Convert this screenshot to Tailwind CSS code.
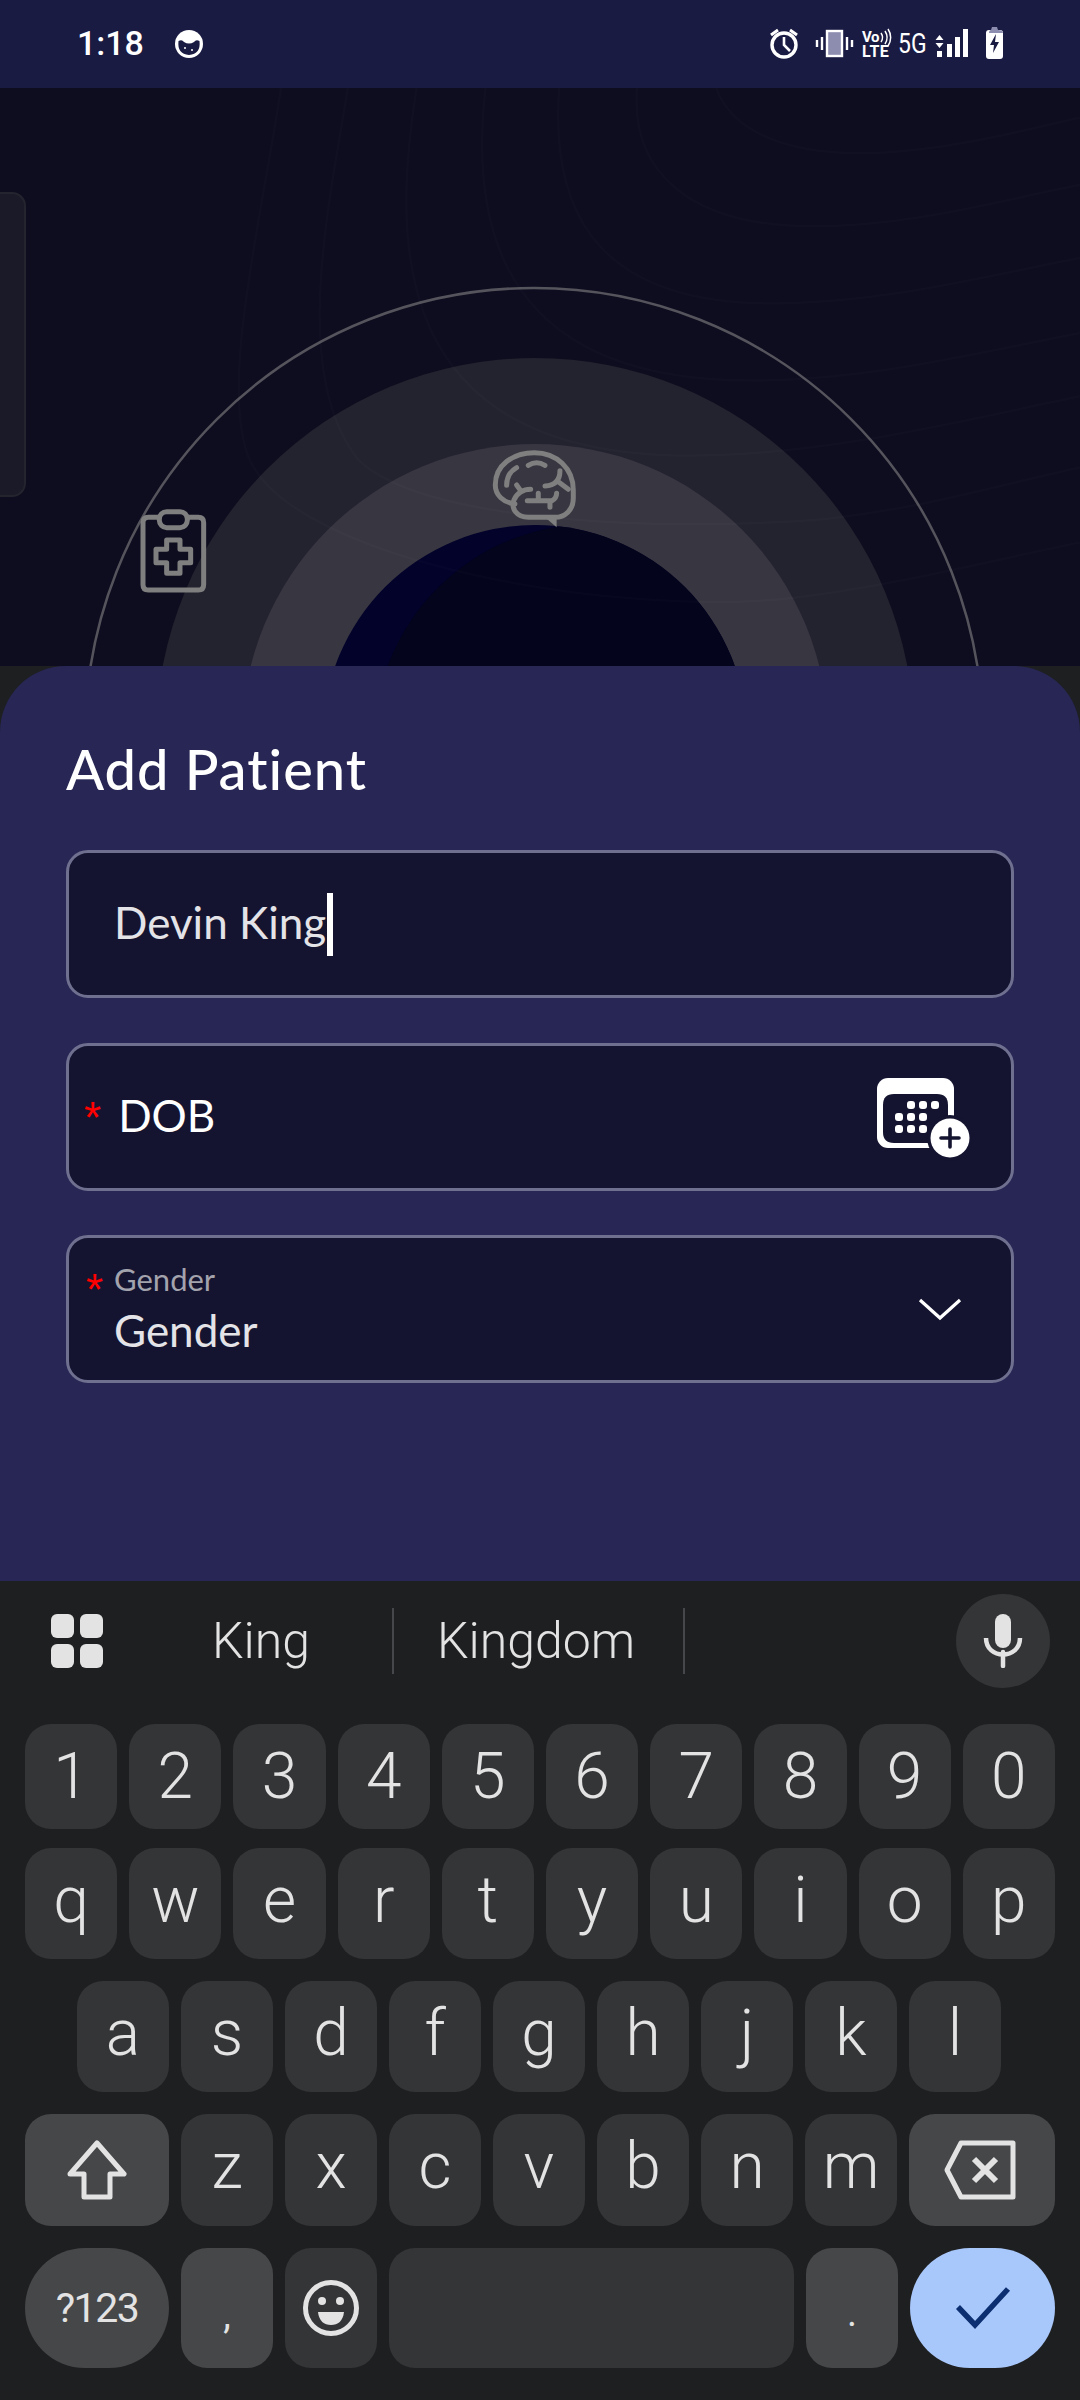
<!doctype html>
<html>
<head>
<meta charset="utf-8">
<script src="https://cdn.jsdelivr.net/npm/@tailwindcss/browser@4"></script>
</head>
<body class="m-0 bg-[#1e1f21]">
<div class="w-[1080px] h-[2400px] flex flex-col overflow-hidden font-['Roboto',sans-serif]">

  <!-- status bar -->
  <div class="h-[88px] shrink-0 bg-[#1a1b42] relative flex items-center text-white">
    <span class="ml-[77px] text-[34px] leading-none font-medium mt-[-2px]">1:18</span>
    <svg class="ml-[31px] mt-[0px]" width="28" height="28" viewBox="0 0 28 28"><circle cx="14" cy="14" r="14" fill="#fff"/><path d="M3.5 11Q7 9 9 12Q14 15 19 12Q21 9 24.500 11Q26 24 14 25Q2 24 3.500 11Z" fill="#1a1b42"/><g fill="#fff"><circle cx="10" cy="18" r="1"/><circle cx="17" cy="20" r="1"/></g></svg>
    <svg class="absolute left-0 top-0" width="1080" height="88" viewBox="0 0 1080 88">
      <g fill="none" stroke="#fff" stroke-width="3.4">
        <circle cx="784" cy="45" r="12"/>
        <path d="M784 37v8l6 6" stroke-width="2.6"/>
        <path d="M771 35l7-5M797 35l-7-5" stroke-width="3"/>
        <rect x="827" y="31" width="15" height="25" stroke-width="2.4" fill="#8d8db0"/>
        <path d="M822 37v13M817 40v7M847 37v13M852 40v7" stroke-width="2.4"/>
        <path d="M881 33a8 8 0 0 1 0 9M885 31a12 12 0 0 1 0 13M888 29a15 15 0 0 1 0 17" stroke-width="1.5"/>
      </g>
      <g fill="#fff">
        <rect x="937" y="51" width="5" height="6"/><rect x="947" y="44" width="5" height="13"/><rect x="955" y="37" width="5" height="20"/><rect x="963" y="29" width="5" height="28"/>
        <path d="M939.500 35l4 5h-8zM939.500 48l-4-5h8z"/>
        <rect x="986" y="30" width="17" height="29" rx="3"/>
      </g>
      <path d="M989 33Q989 30 991 30L992 27H997L998 30Q1003 30 1003 33Z" fill="#8d8db0"/>
      <path d="M996 34l-6 11h4l-1 8 6-11h-4z" fill="#1a1b42"/>
    </svg>
    <span class="absolute left-[862px] top-[30px] text-[15px] leading-[15px] font-bold tracking-[-0.5px]">Vo</span>
    <span class="absolute left-[862px] top-[44px] text-[16px] leading-[15px] font-bold tracking-[0.5px]">LTE</span>
    <span class="absolute left-[898px] top-[30px] text-[28px] leading-[28px] font-normal origin-left scale-x-[0.82]">5G</span>
  </div>

  <!-- dimmed app background -->
  <div class="relative h-[578px] shrink-0 bg-[#0d0d1f] overflow-hidden">
    <svg class="absolute left-0 top-[-88px]" width="1080" height="666" viewBox="0 0 1080 666">
      <defs><clipPath id="core"><circle cx="535" cy="737" r="212"/></clipPath></defs>
      <circle cx="534" cy="737" r="449" fill="none" stroke="#55545c" stroke-width="2.500"/>
      <circle cx="535" cy="737" r="379" fill="#23222f"/>
      <circle cx="535" cy="737" r="293" fill="#383641"/>
      <circle cx="535" cy="737" r="212" fill="#02022a"/>
      <g clip-path="url(#core)"><circle cx="592" cy="742" r="218" fill="#04041c"/></g>
      <g transform="translate(0 80) scale(0.6887 0.3954)" fill="none" stroke="#fff" stroke-opacity="0.016" stroke-width="2.5">
        <path vector-effect="non-scaling-stroke" d="M1040 20C1060 120 1130 185 1250 185C1350 185 1460 140 1568 95"/>
        <path vector-effect="non-scaling-stroke" d="M925 20C915 230 1000 370 1180 370C1320 370 1440 310 1568 265"/>
        <path vector-effect="non-scaling-stroke" d="M812 20C800 300 850 565 1120 565C1280 565 1420 500 1568 450"/>
        <path vector-effect="non-scaling-stroke" d="M705 20C680 400 740 760 1090 760C1260 760 1420 690 1568 640"/>
        <path vector-effect="non-scaling-stroke" d="M605 20C570 400 560 950 1000 950C1200 950 1400 860 1568 800"/>
        <path vector-effect="non-scaling-stroke" d="M505 20C480 300 420 740 520 960C620 1130 1000 1140 1200 1110C1350 1080 1460 1020 1568 980"/>
        <path vector-effect="non-scaling-stroke" d="M408 20C380 350 320 760 360 950C420 1220 900 1360 1150 1310C1300 1280 1450 1210 1568 1170"/>
      </g>
      <!-- clipboard -->
      <g transform="translate(120 430) scale(0.3333)" fill="none" stroke="#7f7f7f" stroke-width="15" stroke-linejoin="round" stroke-linecap="round">
        <path d="M118 262H85Q69 262 69 278V464Q69 480 85 480H235Q251 480 251 464V278Q251 262 235 262H202"/>
        <rect x="118" y="245" width="84" height="48" rx="22"/>
        <path d="M140 330H180V358H212V398H180V430H140V398H108V358H140Z"/>
        <!-- brain -->
        <path d="M1185 222C1150 218 1126 195 1126 165C1126 105 1180 68 1243 68C1310 68 1360 115 1360 180V205C1360 240 1335 262 1305 262H1225C1190 262 1172 235 1182 210C1190 190 1210 178 1232 178"/>
        <path d="M1225 106Q1250 90 1275 106M1160 166Q1160 130 1190 113M1275 168Q1320 165 1320 122M1190 165L1202 182M1315 155L1345 178M1222 212H1296Q1310 205 1310 190M1255 190V212M1290 212V232"/>
        <path d="M1275 262L1310 292V262Z" fill="#7f7f7f" stroke="none"/>
      </g>
    </svg>
    <div class="absolute left-[-14px] top-[104px] w-[40px] h-[305px] rounded-[14px] bg-[#1a1a28] border-2 border-[#24242f]"></div>
  </div>

  <!-- sheet -->
  <div class="relative z-10 h-[915px] shrink-0 bg-[#272654] rounded-t-[66px] px-[66px] pt-[72px] font-['Lato',sans-serif] text-white">
    <div class="text-[56px] leading-[62px] font-medium tracking-[1px]">Add Patient</div>

    <div class="mt-[50px] h-[148px] rounded-[22px] border-[3px] border-[#6f6f90] bg-[#141430] flex items-center pl-[45px]">
      <span class="text-[44px] leading-none text-[#e4e4e8] mt-[-5px]">Devin King</span>
      <span class="ml-[1px] w-[6px] h-[63px] bg-white"></span>
    </div>

    <div class="mt-[45px] h-[148px] rounded-[22px] border-[3px] border-[#6f6f90] bg-[#141430] flex items-center pl-[15px] pr-[36px] relative">
      <span class="text-[44px] leading-none text-[#ff0000] font-['Liberation_Sans',sans-serif] mt-[2px]">*</span>
      <span class="ml-[17px] text-[44px] leading-none mt-[-5px]">DOB</span>
      <svg class="ml-auto mt-[6px]" width="100" height="84" viewBox="0 0 100 84">
        <rect x="2" y="0" width="77" height="70" rx="11" fill="#fff"/>
        <path d="M8 27Q8 16 19 16H62Q73 16 73 27V65H19Q8 65 8 54Z" fill="#141430"/>
        <g fill="#fff"><rect x="32" y="23" width="8" height="8" rx="3"/><rect x="44" y="23" width="8" height="8" rx="3"/><rect x="56" y="23" width="8" height="8" rx="3"/><rect x="20" y="35" width="8" height="8" rx="3"/><rect x="32" y="35" width="8" height="8" rx="3"/><rect x="44" y="35" width="8" height="8" rx="3"/><rect x="20" y="47" width="8" height="8" rx="3"/><rect x="32" y="47" width="8" height="8" rx="3"/><rect x="44" y="47" width="8" height="8" rx="3"/></g>
        <circle cx="75" cy="60" r="23" fill="#141430"/>
        <circle cx="75" cy="60" r="19.5" fill="#fff"/>
        <path d="M75 51v18M66 60h18" stroke="#141430" stroke-width="3.6" stroke-linecap="round"/>
      </svg>
    </div>

    <div class="mt-[44px] h-[148px] rounded-[22px] border-[3px] border-[#6f6f90] bg-[#141430] relative flex items-center justify-between pl-[45px] pr-[49px]">
      <div class="flex flex-col">
        <span class="text-[31px] leading-[38px] text-[#a3a3ad] mt-[-2px]">Gender</span>
        <span class="text-[44px] leading-[52px] mt-[6px] text-[#e4e4e8]">Gender</span>
      </div>
      <span class="absolute left-[17px] top-[30px] text-[44px] leading-none text-[#ff0000] font-['Liberation_Sans',sans-serif]">*</span>
      <svg width="44" height="24" viewBox="0 0 44 24" fill="none" stroke="#fff" stroke-width="3.2"><path d="M2 3L22 21L42 3"/></svg>
    </div>
  </div>

  <!-- keyboard -->
  <div class="flex-1 bg-[#1e1f21] text-[#e3e3e3] relative font-['Roboto',sans-serif]">
    <div class="h-[143px] flex items-start relative">
      <svg class="absolute left-[51px] top-[33px]" width="52" height="54" viewBox="0 0 52 54" fill="#e3e3e3">
        <rect width="23" height="24" rx="6"/><rect x="29" width="23" height="24" rx="6"/><rect y="30" width="23" height="24" rx="6"/><rect x="29" y="30" width="23" height="24" rx="6"/>
      </svg>
      <span class="absolute left-[212px] top-[31px] text-[50px] leading-[58px] font-light">King</span>
      <span class="absolute left-[392px] top-[27px] w-[2px] h-[66px] bg-[#45474a]"></span>
      <span class="absolute left-[437px] top-[31px] text-[50px] leading-[58px] font-light">Kingdom</span>
      <span class="absolute left-[683px] top-[27px] w-[2px] h-[66px] bg-[#45474a]"></span>
      <div class="absolute left-[956px] top-[13px] w-[94px] h-[94px] rounded-full bg-[#343537] flex items-center justify-center">
        <svg width="40" height="54" viewBox="0 0 40 54" fill="none"><rect x="12" y="0" width="16" height="34" rx="8" fill="#e3e3e3"/><path d="M3 24C3 46 37 46 37 24" stroke="#e3e3e3" stroke-width="4.5"/><path d="M20 38V52" stroke="#e3e3e3" stroke-width="4.5" stroke-linecap="round"/></svg>
      </div>
    </div>

    <div class="px-[25px] flex gap-[12px] text-[64px] leading-none font-light">
      <div class="w-[92.2px] h-[105px] rounded-[26px] bg-[#343537] flex items-center justify-center">1</div>
      <div class="w-[92.2px] h-[105px] rounded-[26px] bg-[#343537] flex items-center justify-center">2</div>
      <div class="w-[92.2px] h-[105px] rounded-[26px] bg-[#343537] flex items-center justify-center">3</div>
      <div class="w-[92.2px] h-[105px] rounded-[26px] bg-[#343537] flex items-center justify-center">4</div>
      <div class="w-[92.2px] h-[105px] rounded-[26px] bg-[#343537] flex items-center justify-center">5</div>
      <div class="w-[92.2px] h-[105px] rounded-[26px] bg-[#343537] flex items-center justify-center">6</div>
      <div class="w-[92.2px] h-[105px] rounded-[26px] bg-[#343537] flex items-center justify-center">7</div>
      <div class="w-[92.2px] h-[105px] rounded-[26px] bg-[#343537] flex items-center justify-center">8</div>
      <div class="w-[92.2px] h-[105px] rounded-[26px] bg-[#343537] flex items-center justify-center">9</div>
      <div class="w-[92.2px] h-[105px] rounded-[26px] bg-[#343537] flex items-center justify-center">0</div>
    </div>

    <div class="mt-[19px] px-[25px] flex gap-[12px] text-[64px] leading-none font-light">
      <div class="w-[92.2px] h-[111px] rounded-[26px] bg-[#343537] flex items-center justify-center pb-[6px]">q</div>
      <div class="w-[92.2px] h-[111px] rounded-[26px] bg-[#343537] flex items-center justify-center pb-[6px]">w</div>
      <div class="w-[92.2px] h-[111px] rounded-[26px] bg-[#343537] flex items-center justify-center pb-[6px]">e</div>
      <div class="w-[92.2px] h-[111px] rounded-[26px] bg-[#343537] flex items-center justify-center pb-[6px]">r</div>
      <div class="w-[92.2px] h-[111px] rounded-[26px] bg-[#343537] flex items-center justify-center pb-[6px]">t</div>
      <div class="w-[92.2px] h-[111px] rounded-[26px] bg-[#343537] flex items-center justify-center pb-[6px]">y</div>
      <div class="w-[92.2px] h-[111px] rounded-[26px] bg-[#343537] flex items-center justify-center pb-[6px]">u</div>
      <div class="w-[92.2px] h-[111px] rounded-[26px] bg-[#343537] flex items-center justify-center pb-[6px]">i</div>
      <div class="w-[92.2px] h-[111px] rounded-[26px] bg-[#343537] flex items-center justify-center pb-[6px]">o</div>
      <div class="w-[92.2px] h-[111px] rounded-[26px] bg-[#343537] flex items-center justify-center pb-[6px]">p</div>
    </div>

    <div class="mt-[22px] pl-[77px] flex gap-[12px] text-[64px] leading-none font-light">
      <div class="w-[92px] h-[111px] rounded-[26px] bg-[#343537] flex items-center justify-center pb-[6px]">a</div>
      <div class="w-[92px] h-[111px] rounded-[26px] bg-[#343537] flex items-center justify-center pb-[6px]">s</div>
      <div class="w-[92px] h-[111px] rounded-[26px] bg-[#343537] flex items-center justify-center pb-[6px]">d</div>
      <div class="w-[92px] h-[111px] rounded-[26px] bg-[#343537] flex items-center justify-center pb-[6px]">f</div>
      <div class="w-[92px] h-[111px] rounded-[26px] bg-[#343537] flex items-center justify-center pb-[6px]">g</div>
      <div class="w-[92px] h-[111px] rounded-[26px] bg-[#343537] flex items-center justify-center pb-[6px]">h</div>
      <div class="w-[92px] h-[111px] rounded-[26px] bg-[#343537] flex items-center justify-center pb-[6px]">j</div>
      <div class="w-[92px] h-[111px] rounded-[26px] bg-[#343537] flex items-center justify-center pb-[6px]">k</div>
      <div class="w-[92px] h-[111px] rounded-[26px] bg-[#343537] flex items-center justify-center pb-[6px]">l</div>
    </div>

    <div class="mt-[22px] px-[25px] flex gap-[12px] text-[64px] leading-none font-light">
      <div class="w-[144px] h-[112px] rounded-[26px] bg-[#454748] flex items-center justify-center">
        <svg width="62" height="60" viewBox="0 0 62 60" fill="none" stroke="#e3e3e3" stroke-width="5" stroke-linejoin="round"><path d="M31 3L58 34H44V57H18V34H4Z"/></svg>
      </div>
      <div class="w-[92px] h-[112px] rounded-[26px] bg-[#343537] flex items-center justify-center pb-[6px]">z</div>
      <div class="w-[92px] h-[112px] rounded-[26px] bg-[#343537] flex items-center justify-center pb-[6px]">x</div>
      <div class="w-[92px] h-[112px] rounded-[26px] bg-[#343537] flex items-center justify-center pb-[6px]">c</div>
      <div class="w-[92px] h-[112px] rounded-[26px] bg-[#343537] flex items-center justify-center pb-[6px]">v</div>
      <div class="w-[92px] h-[112px] rounded-[26px] bg-[#343537] flex items-center justify-center pb-[6px]">b</div>
      <div class="w-[92px] h-[112px] rounded-[26px] bg-[#343537] flex items-center justify-center pb-[6px]">n</div>
      <div class="w-[92px] h-[112px] rounded-[26px] bg-[#343537] flex items-center justify-center pb-[6px]">m</div>
      <div class="w-[146px] h-[112px] rounded-[26px] bg-[#454748] flex items-center justify-center pr-[4px]">
        <svg width="72" height="60" viewBox="0 0 72 60" fill="none" stroke="#e3e3e3" stroke-width="5" stroke-linejoin="round"><path d="M17 3H69V57H17L3 30Z"/><path d="M30 19L52 41M52 19L30 41" stroke-width="6"/></svg>
      </div>
    </div>

    <div class="mt-[22px] px-[25px] flex gap-[12px]">
      <div class="w-[144px] h-[120px] rounded-[60px] bg-[#454748] flex items-center justify-center text-[41px] leading-none tracking-[-1.5px]">?123</div>
      <div class="w-[92px] h-[120px] rounded-[26px] bg-[#454748] flex items-end justify-center pb-[34px] text-[38px] leading-none">,</div>
      <div class="w-[92px] h-[120px] rounded-[26px] bg-[#343537] flex items-center justify-center">
        <svg width="58" height="58" viewBox="0 0 58 58" fill="none" stroke="#e3e3e3" stroke-width="5"><circle cx="29" cy="29" r="25.5"/><circle cx="20" cy="22" r="4" fill="#e3e3e3" stroke="none"/><circle cx="38" cy="22" r="4" fill="#e3e3e3" stroke="none"/><path d="M16 33H42C41 42 36 46 29 46C22 46 17 42 16 33Z" fill="#e3e3e3" stroke="none"/></svg>
      </div>
      <div class="w-[405px] h-[120px] rounded-[26px] bg-[#343537]"></div>
      <div class="w-[92px] h-[120px] rounded-[26px] bg-[#454748] flex items-end justify-center pb-[36px] text-[38px] leading-none">.</div>
      <div class="w-[145px] h-[120px] rounded-[60px] bg-[#a8c7fa] flex items-center justify-center">
        <svg width="56" height="44" viewBox="0 0 56 44" fill="none" stroke="#0b2f70" stroke-width="5.5"><path d="M3 21L20 39L53 3"/></svg>
      </div>
    </div>
  </div>
</div>
</body>
</html>
